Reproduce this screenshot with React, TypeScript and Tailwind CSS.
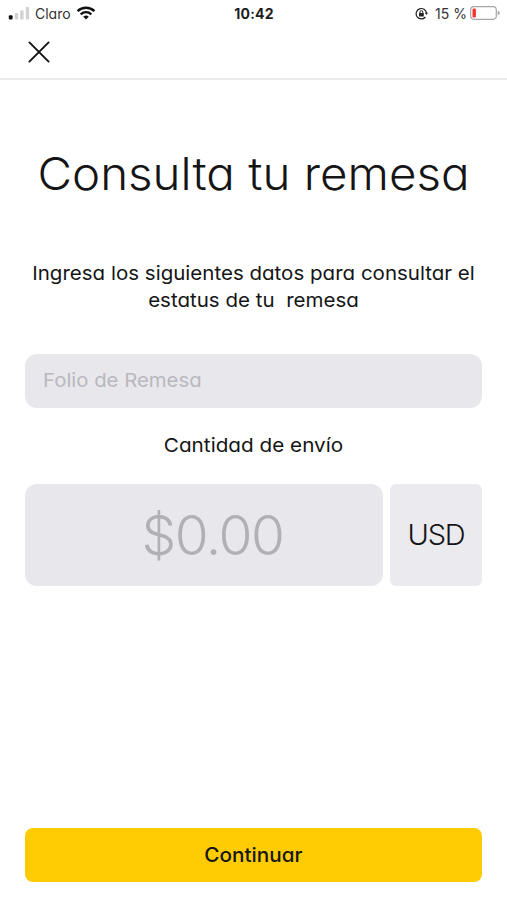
function SignalIcon() {
  return (
    <svg className="h-[14px] w-[22px]" viewBox="0 0 22 14">
      <rect x="0.8" y="9.2" width="3.8" height="4.3" rx="1" fill="#111" />
      <rect x="6.8" y="7" width="3.4" height="6.5" rx="0.8" fill="#d2d2d2" />
      <rect x="12.2" y="4.2" width="3.4" height="9.3" rx="0.8" fill="#d2d2d2" />
      <rect x="17.8" y="1" width="3.4" height="12.5" rx="0.8" fill="#d2d2d2" />
    </svg>
  );
}

function WifiIcon() {
  return (
    <svg className="h-[14px] w-[20px]" viewBox="0 0 20 14" fill="none" stroke="#111">
      <path d="M1.6 5.2a12.2 12.2 0 0 1 16.8 0" strokeWidth="2.5" />
      <path d="M4.7 8.3a7.8 7.8 0 0 1 10.6 0" strokeWidth="2.3" />
      <path d="M10 13.6 7.2 10.7a4.1 4.1 0 0 1 5.6 0z" fill="#111" stroke="none" />
    </svg>
  );
}

function RotationLockIcon() {
  return (
    <svg className="h-[13px] w-[13px]" viewBox="0 0 13 13" fill="none" stroke="#222">
      <path d="M10.4 10a5.2 5.2 0 1 1 1.1-3.9" strokeWidth="1.2" />
      <path d="M9.9 5.7h3.1l-1.5 2.2z" fill="#222" stroke="none" />
      <rect x="4" y="6" width="4.8" height="3.5" rx="0.5" fill="#222" stroke="none" />
      <path d="M5 6.2V5a1.4 1.4 0 0 1 2.8 0v1.2" strokeWidth="1" />
    </svg>
  );
}

function BatteryIcon() {
  return (
    <svg className="h-[14px] w-[30px]" viewBox="0 0 30 14">
      <rect x="0.7" y="0.7" width="25.6" height="12.6" rx="3.2" fill="none" stroke="#a6a6a6" strokeWidth="1.2" />
      <rect x="2.5" y="2.5" width="3.4" height="9" rx="1.2" fill="#f5352b" />
      <path d="M27.7 4.8c1.5.4 2 1.3 2 2.2s-.5 1.8-2 2.2z" fill="#a6a6a6" />
    </svg>
  );
}

function StatusBar() {
  return (
    <div className="grid h-[26px] grid-cols-3 items-center pl-2 pr-[7px] text-[14px] text-[#333]">
      <div className="flex items-center">
        <SignalIcon />
        <span className="ml-[5px] mr-[5px]">Claro</span>
        <WifiIcon />
      </div>
      <span className="text-center font-bold tracking-[0.2px] text-[#1c1c1c]">10:42</span>
      <div className="flex items-center justify-end">
        <RotationLockIcon />
        <span className="ml-[7px] mr-[3px] whitespace-nowrap">15 %</span>
        <BatteryIcon />
      </div>
    </div>
  );
}

export default function App() {
  return (
    <div className="flex h-[900px] w-full flex-col bg-white font-['Inter',sans-serif] text-[#151515] [font-feature-settings:'cv11']">
      <StatusBar />
      <header className="flex h-[54px] items-center border-b-2 border-[#ebebeb] pl-7">
        <button aria-label="Cerrar">
          <svg className="h-[22px] w-[22px]" viewBox="0 0 22 22" fill="none" stroke="#111" strokeWidth="1.9" strokeLinecap="round">
            <path d="M1.4 1.4 20.6 20.6M20.6 1.4 1.4 20.6" />
          </svg>
        </button>
      </header>

      <main className="flex flex-1 flex-col px-[25px] pb-[18px]">
        <h1 className="mt-[64px] scale-x-[1.055] whitespace-nowrap text-center text-[45px] font-light leading-[60px]">
          Consulta tu remesa
        </h1>
        <p className="mt-[56px] scale-x-[1.08] whitespace-pre text-center text-[19px] leading-[27px]">
          {"Ingresa los siguientes datos para consultar el\nestatus de tu  remesa"}
        </p>

        <div className="mt-[40px] flex h-[54px] items-center rounded-xl bg-[#e8e7ec] px-[18px] text-[19px] text-[#b9b8be]">
          <span className="origin-left scale-x-[1.07]">Folio de Remesa</span>
        </div>
        <div className="mt-6 scale-x-[1.09] text-center text-[19px] leading-7">Cantidad de envío</div>

        <div className="mt-6 flex h-[102px] gap-[7px]">
          <div className="flex w-[358px] items-center justify-center rounded-xl bg-[#e8e7ec] pl-[17px] text-[55px] font-light tracking-[-1.5px] text-[#b1b0b5]">
            $0.00
          </div>
          <div className="flex flex-1 items-center justify-center rounded-md bg-[#ebeaef] text-[29px] font-light tracking-[-1.2px]">
            USD
          </div>
        </div>

        <button className="mt-auto h-[54px] rounded-lg bg-[#ffcc03] text-[20px] font-medium">
          <span className="inline-block scale-x-[1.035]">Continuar</span>
        </button>
      </main>
    </div>
  );
}
